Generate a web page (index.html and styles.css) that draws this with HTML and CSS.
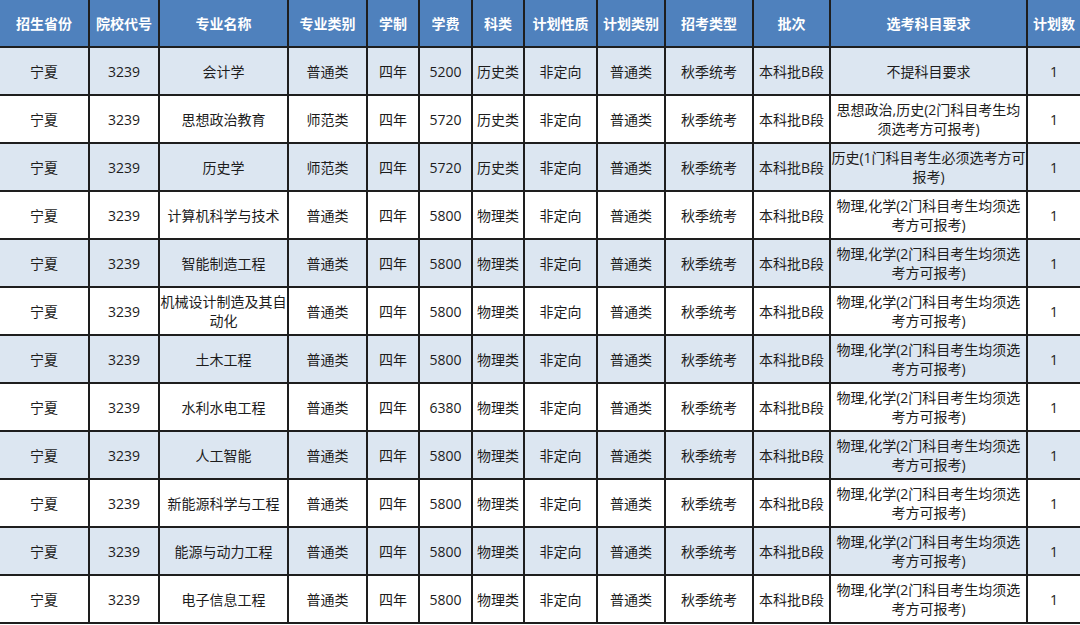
FILE: index.html
```html
<!DOCTYPE html>
<html lang="zh-CN">
<head>
<meta charset="utf-8">
<title>招生计划</title>
<link rel="stylesheet" href="styles.css">
</head>
<body>
<div class="sheet">
  <div class="row head">
    <div class="c">招生省份</div><div class="c">院校代号</div><div class="c">专业名称</div><div class="c">专业类别</div><div class="c">学制</div><div class="c">学费</div><div class="c">科类</div><div class="c">计划性质</div><div class="c">计划类别</div><div class="c">招考类型</div><div class="c">批次</div><div class="c">选考科目要求</div><div class="c">计划数</div>
  </div>
  <div class="row alt">
    <div class="c">宁夏</div><div class="c">3239</div><div class="c">会计学</div><div class="c">普通类</div><div class="c">四年</div><div class="c">5200</div><div class="c">历史类</div><div class="c">非定向</div><div class="c">普通类</div><div class="c">秋季统考</div><div class="c">本科批B段</div><div class="c">不提科目要求</div><div class="c">1</div>
  </div>
  <div class="row">
    <div class="c">宁夏</div><div class="c">3239</div><div class="c">思想政治教育</div><div class="c">师范类</div><div class="c">四年</div><div class="c">5720</div><div class="c">历史类</div><div class="c">非定向</div><div class="c">普通类</div><div class="c">秋季统考</div><div class="c">本科批B段</div><div class="c">思想政治,历史(2门科目考生均<br>须选考方可报考)</div><div class="c">1</div>
  </div>
  <div class="row alt">
    <div class="c">宁夏</div><div class="c">3239</div><div class="c">历史学</div><div class="c">师范类</div><div class="c">四年</div><div class="c">5720</div><div class="c">历史类</div><div class="c">非定向</div><div class="c">普通类</div><div class="c">秋季统考</div><div class="c">本科批B段</div><div class="c">历史(1门科目考生必须选考方可<br>报考)</div><div class="c">1</div>
  </div>
  <div class="row">
    <div class="c">宁夏</div><div class="c">3239</div><div class="c">计算机科学与技术</div><div class="c">普通类</div><div class="c">四年</div><div class="c">5800</div><div class="c">物理类</div><div class="c">非定向</div><div class="c">普通类</div><div class="c">秋季统考</div><div class="c">本科批B段</div><div class="c">物理,化学(2门科目考生均须选<br>考方可报考)</div><div class="c">1</div>
  </div>
  <div class="row alt">
    <div class="c">宁夏</div><div class="c">3239</div><div class="c">智能制造工程</div><div class="c">普通类</div><div class="c">四年</div><div class="c">5800</div><div class="c">物理类</div><div class="c">非定向</div><div class="c">普通类</div><div class="c">秋季统考</div><div class="c">本科批B段</div><div class="c">物理,化学(2门科目考生均须选<br>考方可报考)</div><div class="c">1</div>
  </div>
  <div class="row">
    <div class="c">宁夏</div><div class="c">3239</div><div class="c">机械设计制造及其自<br>动化</div><div class="c">普通类</div><div class="c">四年</div><div class="c">5800</div><div class="c">物理类</div><div class="c">非定向</div><div class="c">普通类</div><div class="c">秋季统考</div><div class="c">本科批B段</div><div class="c">物理,化学(2门科目考生均须选<br>考方可报考)</div><div class="c">1</div>
  </div>
  <div class="row alt">
    <div class="c">宁夏</div><div class="c">3239</div><div class="c">土木工程</div><div class="c">普通类</div><div class="c">四年</div><div class="c">5800</div><div class="c">物理类</div><div class="c">非定向</div><div class="c">普通类</div><div class="c">秋季统考</div><div class="c">本科批B段</div><div class="c">物理,化学(2门科目考生均须选<br>考方可报考)</div><div class="c">1</div>
  </div>
  <div class="row">
    <div class="c">宁夏</div><div class="c">3239</div><div class="c">水利水电工程</div><div class="c">普通类</div><div class="c">四年</div><div class="c">6380</div><div class="c">物理类</div><div class="c">非定向</div><div class="c">普通类</div><div class="c">秋季统考</div><div class="c">本科批B段</div><div class="c">物理,化学(2门科目考生均须选<br>考方可报考)</div><div class="c">1</div>
  </div>
  <div class="row alt">
    <div class="c">宁夏</div><div class="c">3239</div><div class="c">人工智能</div><div class="c">普通类</div><div class="c">四年</div><div class="c">5800</div><div class="c">物理类</div><div class="c">非定向</div><div class="c">普通类</div><div class="c">秋季统考</div><div class="c">本科批B段</div><div class="c">物理,化学(2门科目考生均须选<br>考方可报考)</div><div class="c">1</div>
  </div>
  <div class="row">
    <div class="c">宁夏</div><div class="c">3239</div><div class="c">新能源科学与工程</div><div class="c">普通类</div><div class="c">四年</div><div class="c">5800</div><div class="c">物理类</div><div class="c">非定向</div><div class="c">普通类</div><div class="c">秋季统考</div><div class="c">本科批B段</div><div class="c">物理,化学(2门科目考生均须选<br>考方可报考)</div><div class="c">1</div>
  </div>
  <div class="row alt">
    <div class="c">宁夏</div><div class="c">3239</div><div class="c">能源与动力工程</div><div class="c">普通类</div><div class="c">四年</div><div class="c">5800</div><div class="c">物理类</div><div class="c">非定向</div><div class="c">普通类</div><div class="c">秋季统考</div><div class="c">本科批B段</div><div class="c">物理,化学(2门科目考生均须选<br>考方可报考)</div><div class="c">1</div>
  </div>
  <div class="row">
    <div class="c">宁夏</div><div class="c">3239</div><div class="c">电子信息工程</div><div class="c">普通类</div><div class="c">四年</div><div class="c">5800</div><div class="c">物理类</div><div class="c">非定向</div><div class="c">普通类</div><div class="c">秋季统考</div><div class="c">本科批B段</div><div class="c">物理,化学(2门科目考生均须选<br>考方可报考)</div><div class="c">1</div>
  </div>
</div>
</body>
</html>
```

FILE: styles.css
```css
html, body {
  margin: 0;
  padding: 0;
  background: #ffffff;
}

.sheet {
  width: 1080px;
  font-family: "Open Sans", "Noto Sans CJK SC", sans-serif;
  font-size: 14px;
  color: #1c1c1c;
}

.row {
  display: grid;
  grid-template-columns: 90px 70px 129px 79px 52px 53px 52px 73px 68px 88px 77px 197px 52px;
  height: 48px;
  background: #ffffff;
}

.row.alt {
  background: #dce6f1;
}

.row.head {
  background: #4f81bd;
  color: #ffffff;
  font-weight: 700;
}

.c {
  box-sizing: border-box;
  border-right: 2px solid #1e1e1e;
  border-bottom: 2px solid #1e1e1e;
  display: flex;
  align-items: center;
  justify-content: center;
  text-align: center;
  line-height: 19px;
  white-space: nowrap;
  overflow: hidden;
}

.c:last-child {
  border-right: none;
}
```
